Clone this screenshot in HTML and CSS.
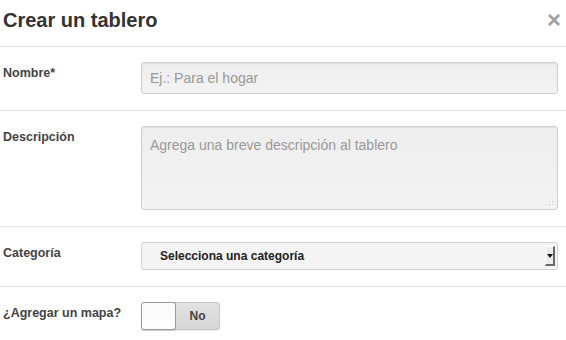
FILE: index.html
```html
<!DOCTYPE html>
<html lang="es">
<head>
    <meta charset="UTF-8">
    <meta name="viewport" content="width=device-width, initial-scale=1.0">
    <title>Crear un tablero</title>
    <link rel="stylesheet" href="styles.css">
</head>
<body>
    <div class="modal">
        <div class="modal-header">
            <h1>Crear un tablero</h1>
            <button class="close" type="button">&times;</button>
        </div>

        <form class="modal-body">
            <div class="field-row">
                <label for="name">Nombre*</label>
                <div class="control">
                    <input id="name" type="text" placeholder="Ej.: Para el hogar">
                </div>
            </div>

            <div class="field-row">
                <label for="description">Descripción</label>
                <div class="control textarea-wrap">
                    <textarea id="description" placeholder="Agrega una breve descripción al tablero"></textarea>
                    <span class="grip"></span>
                </div>
            </div>

            <div class="field-row">
                <label for="category">Categoría</label>
                <div class="control">
                    <div class="select-box">
                        <select id="category">
                            <option>Selecciona una categoría</option>
                        </select>
                        <span class="select-arrow"></span>
                    </div>
                </div>
            </div>

            <div class="field-row">
                <label>¿Agregar un mapa?</label>
                <div class="control">
                    <div class="toggle">
                        <span class="knob"></span>
                        <span class="state">No</span>
                    </div>
                </div>
            </div>
        </form>
    </div>
</body>
</html>
```

FILE: styles.css
```css
/* Page */
body {
    margin: 0;
    padding: 0;
    background: #fff;
    font-family: 'Liberation Sans', Arial, sans-serif;
    color: #333;
}

.modal {
    width: 566px;
}

/* Header */
.modal-header {
    display: flex;
    justify-content: space-between;
    align-items: center;
    padding: 8px 5px 14px 3px;
    border-bottom: 1px solid #e5e5e5;
}

h1 {
    margin: 0;
    font-size: 20px;
    line-height: 24px;
    font-weight: bold;
    color: #333;
}

.close {
    border: none;
    background: none;
    padding: 0;
    font-family: 'Liberation Sans', Arial, sans-serif;
    font-size: 24px;
    line-height: 24px;
    font-weight: bold;
    color: #a0a0a0;
    cursor: pointer;
}

/* Rows */
.field-row {
    display: flex;
    padding: 15px 8px 16px 3px;
    border-bottom: 1px solid #e5e5e5;
}

.field-row:last-child {
    border-bottom: none;
}

.field-row label {
    width: 138px;
    flex-shrink: 0;
    padding-top: 1px;
    font-size: 12.5px;
    line-height: 20px;
    font-weight: bold;
    color: #444;
}

.control {
    flex: 1;
}

/* Inputs */
input,
textarea {
    display: block;
    width: 100%;
    box-sizing: border-box;
    border: 1px solid #cfcfcf;
    border-radius: 3px;
    background: linear-gradient(to bottom, #eeeeee, #f3f3f3);
    box-shadow: inset 0 1px 2px rgba(0, 0, 0, 0.06);
    font-family: 'Liberation Sans', Arial, sans-serif;
    font-size: 14px;
    color: #333;
    padding: 0 8px;
    outline: none;
}

input {
    height: 32px;
}

.textarea-wrap {
    position: relative;
}

textarea {
    height: 84px;
    padding: 8px 8px;
    line-height: 20px;
    resize: none;
}

/* dotted resize grip in the corner */
.grip {
    position: absolute;
    right: 4px;
    bottom: 4px;
    width: 9px;
    height: 9px;
    background-image: radial-gradient(circle, #bdbdbd 0.6px, transparent 0.7px);
    background-size: 3px 3px;
    clip-path: polygon(100% 0, 100% 100%, 0 100%);
}

input::placeholder,
textarea::placeholder {
    color: #999;
}

/* Select */
.select-box {
    display: flex;
    align-items: center;
    height: 28px;
    box-sizing: border-box;
    border: 1px solid #d3d3d3;
    border-radius: 3px;
    background: #f4f4f4;
    padding-right: 1px;
}

.select-box select {
    flex: 1;
    appearance: none;
    -webkit-appearance: none;
    border: none;
    background: transparent;
    height: 100%;
    padding: 0 0 0 18px;
    font-family: 'Liberation Sans', Arial, sans-serif;
    font-size: 12px;
    font-weight: bold;
    color: #222;
    outline: none;
}

.select-arrow {
    width: 10px;
    height: 20px;
    box-sizing: border-box;
    margin-right: 1px;
    background: #ececec;
    border-top: 1px solid #fff;
    border-left: 1px solid #fff;
    border-right: 2px solid #666;
    border-bottom: 2px solid #666;
    display: flex;
    align-items: center;
    justify-content: center;
}

.select-arrow::after {
    content: "";
    border-left: 3px solid transparent;
    border-right: 3px solid transparent;
    border-top: 4px solid #111;
}

/* Toggle */
.toggle {
    display: flex;
    width: 79px;
    height: 28px;
    box-sizing: border-box;
    border: 1px solid #c4c4c4;
    border-radius: 3px;
    background: linear-gradient(to bottom, #e2e2e2, #d6d6d6);
    box-shadow: 0 1px 1px rgba(0, 0, 0, 0.08);
}

.knob {
    width: 35px;
    box-sizing: border-box;
    margin: -1px 0 -1px -1px;
    border: 1px solid #9a9a9a;
    border-radius: 3px;
    background: linear-gradient(to bottom, #fafafa, #ffffff);
    box-shadow: 0 1px 1px rgba(0, 0, 0, 0.15);
}

.state {
    flex: 1;
    text-align: center;
    font-size: 12px;
    font-weight: bold;
    line-height: 26px;
    color: #444;
}
```
